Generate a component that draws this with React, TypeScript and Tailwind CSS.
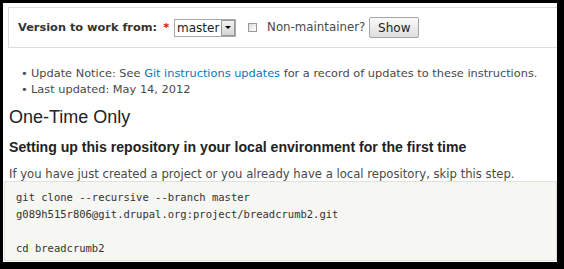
export default function App() {
  const verdana = "font-['DejaVu_Sans',Verdana,sans-serif]";
  const arial = "font-['Liberation_Sans',Arial,sans-serif]";

  return (
    <div className="w-[564px] h-[269px] bg-black pt-[3px] pl-[3px]">
      <div className="w-[554px] h-[259px] bg-white overflow-hidden text-[#494949]">
        {/* version picker */}
        <div
          className={`ml-[5px] mt-[4px] h-[41px] border border-r-0 border-[#dddddd] flex items-center pl-[9px] text-[11.35px] ${verdana}`}
        >
          <span className="font-bold text-[#333]">Version to work from:</span>
          <span className="ml-[6px] text-[#e00] font-bold">*</span>
          <div className="ml-[5px] h-[18px] w-[62px] border border-[#a9a9a9] flex items-center">
            <span className="flex-1 pl-[2px] text-[12px] text-[#222]">master</span>
            <span className="h-[16px] w-[14px] border border-[#999] bg-gradient-to-b from-[#f4f4f4] to-[#d4d4d4] flex items-center justify-center">
              <span className="w-0 h-0 border-l-[3px] border-r-[3px] border-t-[3px] border-l-transparent border-r-transparent border-t-black" />
            </span>
          </div>
          <span className="ml-[12px] w-[9px] h-[9px] border border-[#9a9a9a] bg-gradient-to-br from-[#dcdcdc] to-white" />
          <span className="ml-[10px] text-[11.8px]">Non-maintainer?</span>
          <button className="ml-[4px] h-[21px] w-[50px] rounded-[2px] border border-[#a4a4a4] bg-gradient-to-b from-[#fafafa] to-[#dedede] text-[12px] text-[#222]">
            Show
          </button>
        </div>

        <ul className={`mt-[17px] ml-[18px] text-[11.35px] leading-[16px] ${verdana}`}>
          <li className="flex">
            <span className="w-[10px] shrink-0">•</span>
            <span>
              Update Notice: See <span className="text-[#0678be]">Git instructions updates</span> for a record of
              updates to these instructions.
            </span>
          </li>
          <li className="flex">
            <span className="w-[10px] shrink-0">•</span>
            <span>Last updated: May 14, 2012</span>
          </li>
        </ul>

        <h2 className={`mt-[9px] ml-[6px] text-[18px] leading-[22px] text-[#222] ${arial}`}>One-Time Only</h2>
        <h3 className={`mt-[10px] ml-[6px] text-[14.1px] leading-[18px] font-bold text-[#222] ${arial}`}>
          Setting up this repository in your local environment for the first time
        </h3>
        <p className={`mt-[11px] ml-[6px] text-[11.65px] leading-[14px] ${verdana}`}>
          If you have just created a project or you already have a local repository, skip this step.
        </p>

        <pre
          className={`mt-0 ml-[1px] w-[553px] h-[80px] border border-[#e0e0dc] bg-[#f6f6f2] pl-[11px] pt-[7px] text-[10.5px] leading-[17px] text-[#333] font-['DejaVu_Sans_Mono',monospace]`}
        >
          {'git clone --recursive --branch master\ng089h515r806@git.drupal.org:project/breadcrumb2.git\n\ncd breadcrumb2'}
        </pre>
      </div>
    </div>
  );
}
